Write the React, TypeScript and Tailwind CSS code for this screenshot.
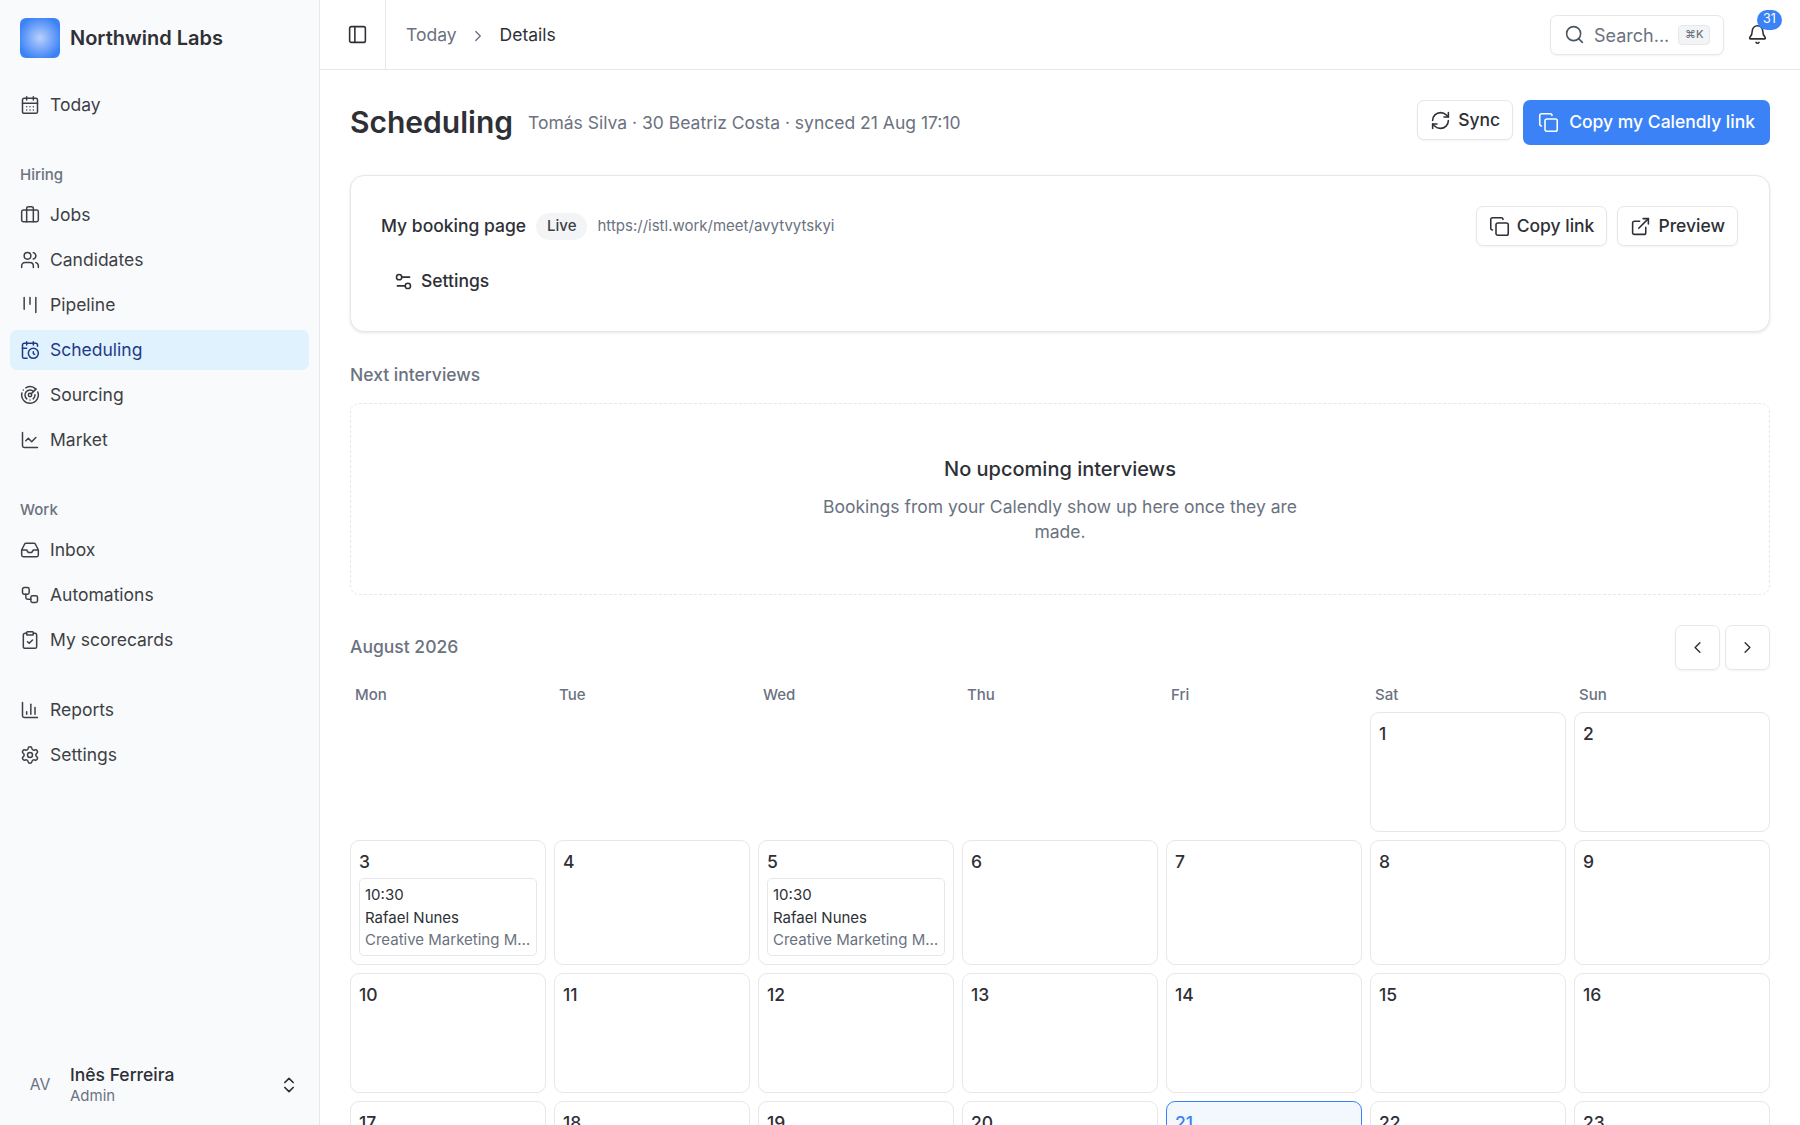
import React from 'react';
import {
  Bell,
  Briefcase,
  CalendarClock,
  CalendarDays,
  ChartColumn,
  ChartLine,
  ChevronLeft,
  ChevronRight,
  ChevronsUpDown,
  ClipboardCheck,
  Copy,
  ExternalLink,
  Inbox,
  Kanban,
  PanelLeft,
  Radar,
  RefreshCw,
  Search,
  Settings,
  Settings2,
  Users,
  Workflow,
} from 'lucide-react';

type NavEntry = { label: string; icon: React.ElementType; active?: boolean };

const hiring: NavEntry[] = [
  { label: 'Jobs', icon: Briefcase },
  { label: 'Candidates', icon: Users },
  { label: 'Pipeline', icon: Kanban },
  { label: 'Scheduling', icon: CalendarClock, active: true },
  { label: 'Sourcing', icon: Radar },
  { label: 'Market', icon: ChartLine },
];

const work: NavEntry[] = [
  { label: 'Inbox', icon: Inbox },
  { label: 'Automations', icon: Workflow },
  { label: 'My scorecards', icon: ClipboardCheck },
];

const bottom: NavEntry[] = [
  { label: 'Reports', icon: ChartColumn },
  { label: 'Settings', icon: Settings },
];

const weekdays = ['Mon', 'Tue', 'Wed', 'Thu', 'Fri', 'Sat', 'Sun'];
const days = Array.from({ length: 23 }, (_, i) => i + 1);

const NavItem: React.FC<{ entry: NavEntry }> = ({ entry }) => {
  const Icon = entry.icon;
  return (
    <a
      className={`flex h-10 items-center gap-[10px] rounded-[7px] px-[10px] text-[17.5px] ${
        entry.active ? 'bg-[#e0f2fe] text-[#1e3a8a]' : 'text-[#3f3f46]'
      }`}
    >
      <Icon size={20} strokeWidth={1.8} />
      <span>{entry.label}</span>
    </a>
  );
};

const OutlineButton: React.FC<{ icon: React.ElementType; label: string }> = ({ icon: Icon, label }) => (
  <button className="flex h-10 items-center gap-[7px] rounded-[7px] border border-[#e5e7eb] bg-white px-[12px] text-[17.5px] font-medium text-[#2e3036] shadow-[0_1px_2px_rgba(0,0,0,0.05)]">
    <Icon size={21} strokeWidth={1.8} />
    {label}
  </button>
);

const Sidebar: React.FC = () => (
  <aside className="flex h-full w-[320px] shrink-0 flex-col border-r border-[#e5e7eb] bg-[#f9fafc] px-[10px]">
    <div className="flex h-[75px] items-center gap-[10px] px-[10px]">
      <div className="h-10 w-10 rounded-[6px] bg-[radial-gradient(circle,#b9d0fd_0%,#3b82f6_78%)]" />
      <span className="text-[20px] font-semibold text-[#2e3036]">Northwind Labs</span>
    </div>
    <div className="mt-[10px]">
      <NavItem entry={{ label: 'Today', icon: CalendarDays }} />
    </div>
    <div className="mt-[37.5px] flex h-[25px] items-center px-[10px] text-[15px] font-medium text-[#6b7280]">Hiring</div>
    <nav className="mt-[7.5px] flex flex-col gap-[5px]">
      {hiring.map((n) => (
        <NavItem key={n.label} entry={n} />
      ))}
    </nav>
    <div className="mt-[37.5px] flex h-[25px] items-center px-[10px] text-[15px] font-medium text-[#6b7280]">Work</div>
    <nav className="mt-[7.5px] flex flex-col gap-[5px]">
      {work.map((n) => (
        <NavItem key={n.label} entry={n} />
      ))}
    </nav>
    <nav className="mt-[30px] flex flex-col gap-[5px]">
      {bottom.map((n) => (
        <NavItem key={n.label} entry={n} />
      ))}
    </nav>
    <div className="mt-auto mb-[20px] flex h-10 items-center px-[10px]">
      <span className="w-10 text-center text-[15.75px] text-[#6b7280]">AV</span>
      <div className="ml-[10px] flex flex-col">
        <span className="text-[17.5px] leading-[22px] font-medium text-[#2e3036]">Inês Ferreira</span>
        <span className="text-[15px] leading-[20px] text-[#6b7280]">Admin</span>
      </div>
      <ChevronsUpDown size={20} className="ml-auto text-[#2e3036]" />
    </div>
  </aside>
);

const Topbar: React.FC = () => (
  <header className="flex h-[70px] shrink-0 items-center border-b border-[#e5e7eb] bg-white">
    <div className="flex h-full w-[66px] items-center justify-end border-r border-[#e5e7eb] pr-[17px]">
      <PanelLeft size={21} strokeWidth={1.8} className="text-[#2e3036]" />
    </div>
    <div className="mt-[2px] ml-[20px] flex items-center text-[17.5px]">
      <span className="text-[#6b7280]">Today</span>
      <ChevronRight size={18} strokeWidth={1.8} className="mx-[12.5px] text-[#6b7280]" />
      <span className="text-[#2e3036]">Details</span>
    </div>
    <div className="ml-auto flex h-10 w-[174px] items-center rounded-[7px] border border-[#e5e7eb] bg-white pl-[13px] shadow-[0_1px_2px_rgba(0,0,0,0.05)]">
      <Search size={21} strokeWidth={1.8} className="text-[#4b5563]" />
      <span className="mt-[1px] ml-[9px] text-[18px] text-[#6b7280]">Search...</span>
      <span className="ml-[9px] flex h-[20px] w-[32px] items-center justify-center rounded-[4px] border border-[#e5e7eb] bg-[#f3f4f6] text-[11px] font-medium text-[#6b7280]">
        ⌘K
      </span>
    </div>
    <div className="relative mr-[33px] ml-[23px] flex h-[22px] w-5 items-center justify-center">
      <Bell size={21} strokeWidth={1.8} className="shrink-0 text-[#2e3036]" />
      <span className="absolute top-[-14px] left-[10px] flex h-5 min-w-[25px] items-center justify-center rounded-full bg-[#3b82f6] text-[12.5px] text-white">
        31
      </span>
    </div>
  </header>
);

const DayCell: React.FC<{ day: number }> = ({ day }) => {
  const today = day === 21;
  const hasEvent = day === 3 || day === 5;
  return (
    <div
      className={`min-h-[120px] rounded-[9px] border p-[8px] ${day === 1 ? 'col-start-6' : ''} ${
        today ? 'border-[#3b82f6] bg-[#f3f8ff]' : 'border-[#e5e7eb] bg-white'
      }`}
    >
      <div className={`h-[25px] text-[17.5px] leading-[25px] font-medium ${today ? 'text-[#3b82f6]' : 'text-[#2e3036]'}`}>{day}</div>
      {hasEvent && (
        <div className="mt-[4px] rounded-[5px] border border-[#e5e7eb] bg-white px-[5px] pt-[5px] pb-[3px] text-[15px] leading-[22.5px]">
          <div className="text-[#2e3036]">10:30</div>
          <div className="text-[#2e3036]">Rafael Nunes</div>
          <div className="truncate text-[#6b7280]">Creative Marketing Manager</div>
        </div>
      )}
    </div>
  );
};

const App: React.FC = () => {
  return (
    <div className="flex h-screen w-full overflow-hidden bg-white font-['Inter',sans-serif] text-[#2e3036]">
      <Sidebar />
      <div className="flex min-w-0 flex-1 flex-col">
        <Topbar />
        <main className="flex-1 overflow-hidden px-[30px] pt-[30px]">
          <div className="flex items-start justify-between">
            <div className="flex h-[45px] items-center gap-[15px]">
              <h1 className="text-[30px] font-semibold text-[#2e3036]">Scheduling</h1>
              <span className="mt-[2px] text-[17.5px] text-[#6b7280]">Tomás Silva · 30 Beatriz Costa · synced 21 Aug 17:10</span>
            </div>
            <div className="flex items-start gap-[10px]">
              <OutlineButton icon={RefreshCw} label="Sync" />
              <button className="flex h-[45px] items-center gap-[10px] rounded-[7px] bg-[#3b82f6] px-[15px] text-[17.5px] font-medium text-white">
                <Copy size={21} strokeWidth={1.8} />
                Copy my Calendly link
              </button>
            </div>
          </div>

          <section className="mt-[30px] rounded-[14px] border border-[#e5e7eb] bg-white pt-[30px] pr-[31px] pb-[30px] pl-[30px] shadow-[0_1px_3px_rgba(0,0,0,0.1)]">
            <div className="flex h-10 items-center">
              <span className="text-[17.5px] font-medium text-[#2e3036]">My booking page</span>
              <span className="ml-[10px] flex h-[27px] items-center rounded-full bg-[#f3f4f6] px-[11px] text-[15px] font-medium text-[#3f3f46]">Live</span>
              <span className="ml-[10px] text-[15px] text-[#6b7280]">https://istl.work/meet/avytvytskyi</span>
              <div className="ml-auto flex gap-[10px]">
                <OutlineButton icon={Copy} label="Copy link" />
                <OutlineButton icon={ExternalLink} label="Preview" />
              </div>
            </div>
            <button className="mt-[15px] flex h-10 items-center gap-[7px] px-[12px] text-[17.5px] font-medium text-[#2e3036]">
              <Settings2 size={21} strokeWidth={1.8} />
              Settings
            </button>
          </section>

          <div className="mt-[30px] h-[25px] text-[17.5px] leading-[25px] font-medium text-[#6b7280]">Next interviews</div>
          <section className="mt-[16px] flex h-[192px] flex-col items-center justify-center rounded-[9px] border border-dashed border-[#e5e7eb] text-center">
            <div className="text-[20px] font-medium text-[#2e3036]">No upcoming interviews</div>
            <p className="mt-[10px] w-[500px] text-[17.5px] leading-[25px] text-[#6b7280]">
              Bookings from your Calendly show up here once they are made.
            </p>
          </section>

          <div className="mt-[30px] flex h-[45px] items-center justify-between">
            <span className="text-[17.5px] font-medium text-[#6b7280]">August 2026</span>
            <div className="flex gap-[5px]">
              <button className="flex h-[45px] w-[45px] items-center justify-center rounded-[7px] border border-[#e5e7eb] bg-white shadow-[0_1px_2px_rgba(0,0,0,0.05)]">
                <ChevronLeft size={19} strokeWidth={1.8} />
              </button>
              <button className="flex h-[45px] w-[45px] items-center justify-center rounded-[7px] border border-[#e5e7eb] bg-white shadow-[0_1px_2px_rgba(0,0,0,0.05)]">
                <ChevronRight size={19} strokeWidth={1.8} />
              </button>
            </div>
          </div>

          <div className="mt-[12px] grid grid-cols-7 gap-x-2">
            {weekdays.map((d) => (
              <div key={d} className="h-[25px] px-[5px] text-[15px] leading-[25px] font-medium text-[#6b7280]">
                {d}
              </div>
            ))}
          </div>
          <div className="mt-[5px] grid grid-cols-7 gap-2">
            {days.map((d) => (
              <DayCell key={d} day={d} />
            ))}
          </div>
        </main>
      </div>
    </div>
  );
};

export default App;
